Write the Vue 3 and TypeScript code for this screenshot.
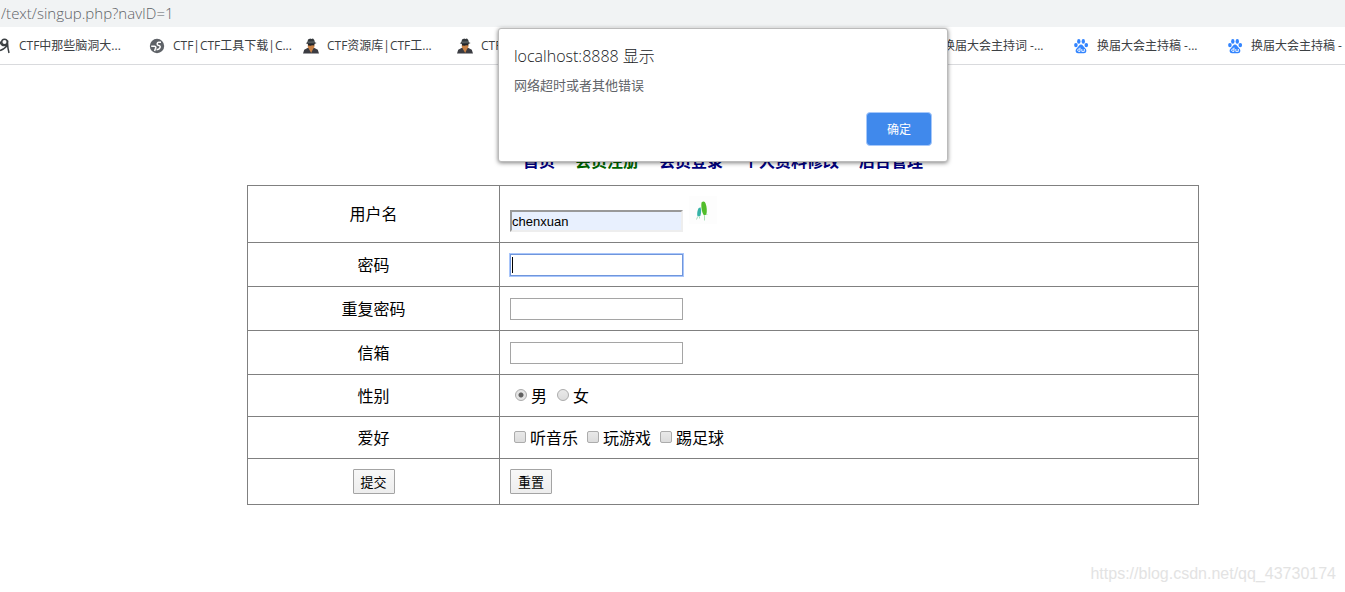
<script setup lang="ts">
import { ref } from 'vue'

interface Bookmark {
  icon: 'figure' | 'globe' | 'agent' | 'paw'
  title: string
}

const leftBookmarks: Bookmark[] = [
  { icon: 'figure', title: 'CTF中那些脑洞大...' },
  { icon: 'globe', title: 'CTF|CTF工具下载|C...' },
  { icon: 'agent', title: 'CTF资源库|CTF工...' },
  { icon: 'agent', title: 'CTF' },
]
const rightBookmarks: Bookmark[] = [
  { icon: 'paw', title: '换届大会主持词 -...' },
  { icon: 'paw', title: '换届大会主持稿 -...' },
  { icon: 'paw', title: '换届大会主持稿 -' },
]
const groups = [leftBookmarks, rightBookmarks]

const links = ['首页', '会员注册', '会员登录', '个人资料修改', '后台管理']
const current = '会员注册'

const address = ref('/text/singup.php?navID=1')
const username = ref('chenxuan')
const password = ref('')
const repeated = ref('')
const email = ref('')
const gender = ref('男')
const hobbies = ref<string[]>([])
const genderOptions = ['男', '女']
const hobbyOptions = ['听音乐', '玩游戏', '踢足球']
const alertOpen = ref(true)
</script>

<template>
  <div class="browser">
    <header>
      <div class="address">
        <input v-model="address" type="text" aria-label="URL" />
      </div>
      <nav class="bookmarks">
        <ul v-for="(group, g) in groups" :key="g">
          <li v-for="(b, i) in group" :key="i">
            <a href="#">
              <svg v-if="b.icon === 'figure'" viewBox="0 0 16 16" fill="none" stroke="#3c4043" stroke-width="1.5">
                <circle cx="9.5" cy="4" r="2.8" />
                <path d="M5 3.5C6 8 9 8.5 13 6.5M12.8 2.5C12 7 13 11 14 15M12 8C9 11 7 12.5 4 12.5" />
              </svg>
              <svg v-else-if="b.icon === 'globe'" viewBox="0 0 16 16">
                <circle cx="8" cy="8" r="7.2" fill="#5f6368" />
                <path d="M12 4.2H9.6C8 4.2 7.6 6.8 9.2 7.2C11 7.6 11.6 8.4 11 9.6C10.4 11 9 11.6 7.6 11.8" fill="none" stroke="#fff" stroke-width="1.5" />
                <path d="M2.2 8.2H5.6C7 8.4 7.2 9.8 6.4 10.6L5.6 13" fill="none" stroke="#fff" stroke-width="1.5" />
              </svg>
              <svg v-else-if="b.icon === 'agent'" viewBox="0 0 16 16">
                <path d="M0 15.5 1.2 11.8 5 9.8H11L14.8 11.8 16 15.5Z" fill="#3b3c42" />
                <path d="M4.8 5H11.4V9L9.8 11.6 8.2 15 6.2 11.4 4.8 9Z" fill="#c98145" />
                <path d="M5 6H11.3V7.6L9 7.3 7.8 7.8 5 7.5Z" fill="#20242a" />
                <path d="M2.8 5.2C4 4.8 4.5 4.2 5 1.5L7.2.5 8.2 1 10 .4 11.3 2 11.8 4.3 13.6 5 11.4 6 5 6Z" fill="#34383c" />
                <path d="M4.7 4.2 11.6 4" stroke="#798080" stroke-width=".8" />
              </svg>
              <svg v-else viewBox="0 0 16 16" fill="#3385ff">
                <ellipse cx="2.9" cy="7.1" rx="1.8" ry="2.2" />
                <ellipse cx="5.8" cy="3.4" rx="1.7" ry="2.3" />
                <ellipse cx="10.3" cy="3.4" rx="1.7" ry="2.3" />
                <ellipse cx="13.3" cy="7.1" rx="1.8" ry="2.2" />
                <path d="M8 6.6C6.2 6.6 5.7 8.7 4.1 10 1.8 11.8 2.3 15.2 5 15.2H11C13.7 15.2 14.2 11.8 11.9 10 10.3 8.7 9.8 6.6 8 6.6Z" />
                <path d="M7 9.6V13.4H5.8C4.2 13.4 4.2 11 5.8 11H7M8.8 11V13.4H11.3V11" fill="none" stroke="#fff" stroke-width=".9" />
              </svg>
              <span>{{ b.title }}</span>
            </a>
          </li>
        </ul>
      </nav>
    </header>

    <main>
      <nav class="site-nav">
        <a v-for="l in links" :key="l" href="#" :class="{ current: l === current }">{{ l }}</a>
      </nav>
      <form @submit.prevent>
        <table>
          <tbody>
            <tr class="tall">
              <th scope="row"><label for="username">用户名</label></th>
              <td>
                <div class="user-field">
                  <input id="username" v-model="username" class="text filled" type="text" />
                  <svg class="leaf" viewBox="0 0 28 28" aria-hidden="true">
                    <rect width="28" height="28" fill="#fdfdfd" />
                    <path d="M12.5 6.5C14 4.8 16 5 16.6 7.5 18 11 18 15 17.5 18.5L15 19.5C12.5 16 12 10 12.5 6.5Z" fill="#52bd2b" />
                    <path d="M9.5 12.2 11.5 11.2C12.5 14 12.3 17 11.3 20L8.5 20.5C7.8 18 8.3 14.5 9.5 12.2Z" fill="#35b3a7" />
                    <path d="M8.5 21 7.5 23.5M10.5 20.5V22.5M15.5 19.5V24.5M17.5 17.5 18 19" stroke="#a9dfb9" stroke-width="1" />
                  </svg>
                </div>
              </td>
            </tr>
            <tr class="field">
              <th scope="row"><label for="password">密码</label></th>
              <td>
                <div class="active">
                  <input id="password" v-model="password" class="text" type="password" />
                  <i class="caret"></i>
                </div>
              </td>
            </tr>
            <tr class="field">
              <th scope="row"><label for="repeated">重复密码</label></th>
              <td><input id="repeated" v-model="repeated" class="text" type="password" /></td>
            </tr>
            <tr class="field">
              <th scope="row"><label for="email">信箱</label></th>
              <td><input id="email" v-model="email" class="text" type="text" /></td>
            </tr>
            <tr class="choice">
              <th scope="row">性别</th>
              <td>
                <div class="options">
                  <label v-for="o in genderOptions" :key="o">
                    <input v-model="gender" type="radio" name="gender" :value="o" />{{ o }}
                  </label>
                </div>
              </td>
            </tr>
            <tr class="choice">
              <th scope="row">爱好</th>
              <td>
                <div class="options">
                  <label v-for="o in hobbyOptions" :key="o">
                    <input v-model="hobbies" type="checkbox" :value="o" />{{ o }}
                  </label>
                </div>
              </td>
            </tr>
            <tr class="actions">
              <th scope="row"><button type="submit">提交</button></th>
              <td><button type="reset">重置</button></td>
            </tr>
          </tbody>
        </table>
      </form>
    </main>

    <section v-if="alertOpen" class="alert" role="alertdialog" aria-labelledby="alert-title">
      <h1 id="alert-title">localhost:8888 显示</h1>
      <p>网络超时或者其他错误</p>
      <button type="button" @click="alertOpen = false">确定</button>
    </section>

    <footer>https://blog.csdn.net/qq_43730174</footer>
  </div>
</template>

<style>
body {
  margin: 0;
  background: #fff;
}
</style>

<style scoped>
.browser {
  --page-left: 101px;
  position: relative;
  display: flex;
  flex-direction: column;
  min-height: 100vh;
  overflow: hidden;
  color: #000;
  font: 16px/22px "Liberation Sans", "Noto Sans CJK SC", sans-serif;
}
.address {
  height: 27px;
  background: #f1f3f4;
}
.address input {
  display: block;
  box-sizing: border-box;
  width: 100%;
  height: 26px;
  padding: 0 1px;
  border: 0;
  background: none;
  color: #5f6368;
  font: 300 15px/26px "Open Sans", sans-serif;
}
.bookmarks {
  display: flex;
  justify-content: space-between;
  height: 37px;
  margin: 0 -36px 0 -5px;
  border-bottom: 1px solid #d9dadd;
}
.bookmarks ul {
  display: flex;
  margin: 0;
  padding: 0;
  list-style: none;
}
.bookmarks li {
  width: 154px;
}
.bookmarks a {
  display: flex;
  align-items: center;
  gap: 8px;
  height: 37px;
  color: #3c4043;
  font: 12px/16px "Open Sans", "Noto Sans CJK SC", sans-serif;
  text-decoration: none;
  white-space: nowrap;
}
.bookmarks svg {
  flex: none;
  width: 16px;
  height: 16px;
}
main {
  margin-left: var(--page-left);
  padding-top: 86px;
}
.site-nav {
  display: flex;
  justify-content: center;
  gap: 20px;
  height: 34px;
  font-weight: bold;
}
.site-nav a {
  color: #000080;
  text-decoration: none;
}
.site-nav a.current {
  color: #006400;
}
table {
  width: 952px;
  max-width: 100%;
  margin: 0 auto;
  border-collapse: collapse;
  table-layout: fixed;
}
th,
td {
  box-sizing: border-box;
  padding: 0 10px;
  border: 1px solid #808080;
  font-weight: normal;
  vertical-align: middle;
}
th {
  width: 252px;
  padding-top: 2px;
}
.tall {
  height: 57px;
}
.field {
  height: 44px;
}
.choice {
  height: 42px;
}
.actions {
  height: 46px;
}
.actions th {
  padding-top: 0;
}
.text {
  display: block;
  box-sizing: border-box;
  width: 173px;
  height: 22px;
  padding: 1px 2px;
  border: 1px solid #a5a5a5;
  background: #fff;
  font: 13px/16px "Liberation Sans", sans-serif;
  outline: none;
}
.text.filled {
  padding: 1px 0;
  border: 2px solid;
  border-color: #999 #eee #eee #999;
  background: #e8f0fe;
}
.user-field {
  display: flex;
  align-items: flex-end;
  gap: 6px;
  height: 36px;
}
.leaf {
  align-self: flex-start;
  width: 28px;
  height: 28px;
}
.active {
  position: relative;
  width: 173px;
}
.active .text {
  border-color: #7096dc;
  box-shadow: 0 0 0 1px #a9c6fb;
}
.caret {
  position: absolute;
  top: 3px;
  left: 2px;
  width: 1px;
  height: 16px;
  background: #000;
}
.options {
  display: flex;
  gap: 5px;
  padding-top: 2px;
}
.options label {
  display: flex;
  align-items: center;
}
.options input {
  appearance: none;
  box-sizing: border-box;
  width: 12px;
  height: 12px;
  margin: 0 4px 4px;
  border: 1px solid #acacac;
  border-radius: 2px;
  background: linear-gradient(#e9e9e9, #dcdcdc);
}
.options input[type="radio"] {
  margin-left: 5px;
  border-radius: 50%;
}
.options input[type="radio"]:checked {
  background: radial-gradient(circle, #606060 0 2px, #e4e4e4 3px);
}
.options input[type="checkbox"]:checked {
  background: #606060;
}
.actions button {
  display: block;
  box-sizing: border-box;
  width: 42px;
  height: 25px;
  padding: 0;
  border: 1px solid #a4a4a4;
  border-radius: 1px;
  background: linear-gradient(#f8f8f8, #ededed);
  color: #000;
  font: 13px/21px "Noto Sans CJK SC", sans-serif;
}
.actions th button {
  margin: 0 auto;
}
.alert {
  position: absolute;
  top: 28px;
  right: 0;
  left: var(--page-left);
  display: flex;
  flex-direction: column;
  box-sizing: border-box;
  width: 450px;
  margin: 0 auto;
  padding: 16px 15px 15px;
  border: 1px solid #bbb;
  border-radius: 3px;
  background: #fff;
  box-shadow: 0 1px 4px rgb(0 0 0 / 50%);
  font-family: "Open Sans", "Noto Sans CJK SC", sans-serif;
}
.alert h1 {
  margin: 0;
  color: #202124;
  font-size: 16px;
  font-weight: 300;
  line-height: 22px;
}
.alert p {
  margin: 8px 0 17px;
  color: #5f6368;
  font-size: 13px;
  line-height: 20px;
}
.alert button {
  align-self: flex-end;
  box-sizing: border-box;
  width: 66px;
  height: 34px;
  padding: 0;
  border: 1px solid #a6c8fa;
  border-radius: 4px;
  background: #4089ec;
  color: #fff;
  font: 12px/20px "Noto Sans CJK SC", sans-serif;
}
footer {
  margin-top: auto;
  padding: 0 9px 7px;
  color: #e3e3e3;
  text-align: right;
}
</style>
